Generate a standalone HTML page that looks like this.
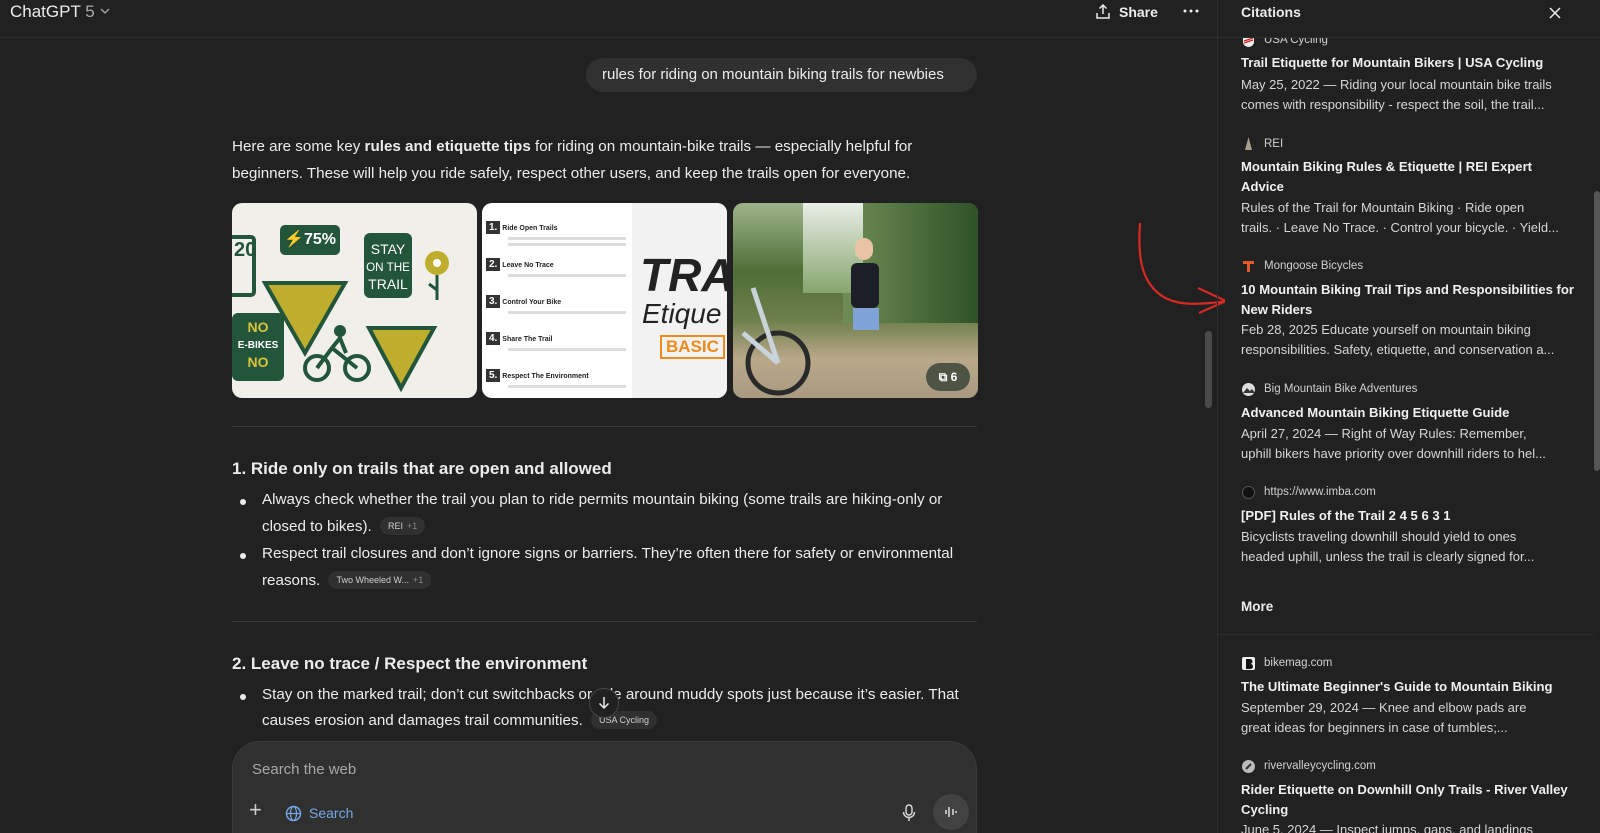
<!DOCTYPE html>
<html><head><meta charset="utf-8"><style>
*{box-sizing:border-box;margin:0;padding:0}
html,body{width:1600px;height:833px;overflow:hidden}
body{background:#212121;color:#ececec;font-family:"Liberation Sans",sans-serif;position:relative}
.abs{position:absolute}
.main-t{font-size:15.2px;line-height:27px;color:#ececec;white-space:nowrap}
.pill{display:inline-block;background:#303030;color:#cfcfcf;font-size:9px;border-radius:9px;padding:2px 8px;line-height:14px;vertical-align:2px;margin-left:4px}
.pill span{color:#888;margin-left:4px}
.bul{position:absolute;left:240px;width:6px;height:6px;border-radius:3px;background:#ececec}
.h{font-size:17px;font-weight:bold;white-space:nowrap}
.sb{position:absolute;left:1241px;font-size:13px;white-space:nowrap}
.src{left:1264px;color:#d0d0d0;font-size:11.5px}
.ttl{font-weight:bold;color:#f0f0f0;font-size:13.1px;line-height:19.5px}
.dsc{color:#d6d6d6;line-height:19.5px}
.fav{position:absolute;left:1242px;width:13px;height:13px}
</style></head><body>
<div class="abs" style="left:10px;top:2px;font-size:17px;color:#ececec">ChatGPT <span style="color:#aaa">5</span> <svg width="12" height="10" viewBox="0 0 12 10" style="vertical-align:1px"><path d="M2 3l4 4 4-4" stroke="#aaa" fill="none" stroke-width="1.3"/></svg></div>
<div class="abs" style="left:0;top:37px;width:1217px;height:1px;background:#2e2e2e"></div>
<svg class="abs" style="left:1095px;top:3px" width="16" height="17" viewBox="0 0 16 17"><path d="M8 11V2M4.5 5.5L8 2l3.5 3.5M2 10v5h12v-5" stroke="#ececec" fill="none" stroke-width="1.5"/></svg>
<div class="abs" style="left:1119px;top:4px;font-size:14px;font-weight:bold">Share</div>
<svg class="abs" style="left:1183px;top:9px" width="16" height="4"><circle cx="2" cy="2" r="1.5" fill="#ececec"/><circle cx="8" cy="2" r="1.5" fill="#ececec"/><circle cx="14" cy="2" r="1.5" fill="#ececec"/></svg>
<div class="abs" style="left:586px;top:58px;width:391px;height:34px;background:#303030;border-radius:17px;font-size:15px;line-height:34px;padding-left:16px">rules for riding on mountain biking trails for newbies</div>
<div class="abs main-t" style="left:232px;top:133px">Here are some key <b>rules and etiquette tips</b> for riding on mountain-bike trails — especially helpful for</div>
<div class="abs main-t" style="left:232px;top:160px">beginners. These will help you ride safely, respect other users, and keep the trails open for everyone.</div>
<div class="abs" style="left:232px;top:203px;width:245px;height:195px;background:#f1efea;border-radius:10px;overflow:hidden">
 <div class="abs" style="left:-6px;top:32px;width:30px;height:62px;border:4px solid #22553a;border-radius:5px;color:#22553a;font-weight:bold;font-size:20px;padding-left:4px">20</div>
 <div class="abs" style="left:48px;top:22px;width:60px;height:30px;background:#22553a;border-radius:5px;color:#fff;font-weight:bold;font-size:16px;line-height:30px;text-align:center">⚡75%</div>
 <div class="abs" style="left:132px;top:30px;width:48px;height:65px;background:#22553a;border-radius:6px;color:#fff;font-size:14px;text-align:center;line-height:17px;padding-top:8px">STAY<br><small>ON THE</small><br>TRAIL</div>
 <svg class="abs" style="left:28px;top:75px" width="90" height="80"><path d="M5 5h80L45 75z" fill="#bfae2e" stroke="#22553a" stroke-width="4"/></svg>
 <svg class="abs" style="left:132px;top:120px" width="75" height="70"><path d="M5 5h65L37 65z" fill="#bfae2e" stroke="#22553a" stroke-width="4"/></svg>
 <div class="abs" style="left:0;top:110px;width:52px;height:68px;background:#22553a;border-radius:6px;color:#d9c33a;font-weight:bold;font-size:14px;text-align:center;line-height:16px;padding-top:6px">NO<br><span style="color:#fff;font-size:10px">E-BIKES</span><br>NO</div>
 <svg class="abs" style="left:70px;top:120px" width="70" height="60"><circle cx="15" cy="45" r="12" stroke="#22553a" stroke-width="4" fill="none"/><circle cx="55" cy="45" r="12" stroke="#22553a" stroke-width="4" fill="none"/><circle cx="38" cy="8" r="6" fill="#22553a"/><path d="M15 45l15-20 25 20M30 25l8-10 6 15" stroke="#22553a" stroke-width="4" fill="none"/></svg>
 <svg class="abs" style="left:185px;top:45px" width="40" height="55"><circle cx="20" cy="15" r="12" fill="#bfae2e"/><circle cx="20" cy="15" r="4" fill="#fff"/><path d="M20 27v25M20 42l-8-6" stroke="#22553a" stroke-width="3"/></svg>
</div>
<div class="abs" style="left:482px;top:203px;width:245px;height:195px;background:#fff;border-radius:10px;overflow:hidden">
 <div class="abs" style="left:150px;top:0;width:95px;height:195px;background:#f2f2f2"></div>
 <div class="abs" style="left:158px;top:45px;font-size:46px;font-style:italic;font-weight:bold;color:#222">TRA</div>
 <div class="abs" style="left:160px;top:95px;font-size:28px;color:#222;font-style:italic">Etique</div>
 <div class="abs" style="left:178px;top:132px;border:2px solid #f08a1a;color:#f08a1a;font-weight:bold;font-size:17px;padding:0 4px">BASIC</div>
 <div class="abs" style="left:4px;top:18px;width:140px;font-size:7px;color:#222">
  <div style="height:37px"><b style="display:inline-block;background:#333;color:#fff;padding:1px 3px;font-size:10px">1.</b> <b>Ride Open Trails</b><div style="height:3px;background:#ddd;margin:3px 0 0 22px"></div><div style="height:3px;background:#ddd;margin:3px 0 0 22px"></div></div>
  <div style="height:37px"><b style="display:inline-block;background:#333;color:#fff;padding:1px 3px;font-size:10px">2.</b> <b>Leave No Trace</b><div style="height:3px;background:#ddd;margin:3px 0 0 22px"></div></div>
  <div style="height:37px"><b style="display:inline-block;background:#333;color:#fff;padding:1px 3px;font-size:10px">3.</b> <b>Control Your Bike</b><div style="height:3px;background:#ddd;margin:3px 0 0 22px"></div></div>
  <div style="height:37px"><b style="display:inline-block;background:#333;color:#fff;padding:1px 3px;font-size:10px">4.</b> <b>Share The Trail</b><div style="height:3px;background:#ddd;margin:3px 0 0 22px"></div></div>
  <div style="height:37px"><b style="display:inline-block;background:#333;color:#fff;padding:1px 3px;font-size:10px">5.</b> <b>Respect The Environment</b><div style="height:3px;background:#ddd;margin:3px 0 0 22px"></div></div>
 </div>
</div>
<div class="abs" style="left:733px;top:203px;width:245px;height:195px;border-radius:10px;overflow:hidden;background:linear-gradient(180deg,#9fb48a 0%,#4d6e36 35%,#6f7f4c 60%,#b9a88a 80%,#a99a80 100%)">
 <div class="abs" style="left:110px;top:0;width:135px;height:120px;background:linear-gradient(90deg,#6f8d55,#2f5227)"></div>
 <div class="abs" style="left:70px;top:0;width:60px;height:90px;background:linear-gradient(180deg,#e8eee6,#86a56e)"></div>
 <div class="abs" style="left:118px;top:60px;width:28px;height:45px;background:#1d1f28;border-radius:6px"></div>
 <div class="abs" style="left:122px;top:35px;width:18px;height:22px;background:#e8c3a6;border-radius:9px"></div>
 <div class="abs" style="left:120px;top:105px;width:26px;height:22px;background:#7fa3d6"></div>
 <svg class="abs" style="left:0;top:70px" width="80" height="125"><circle cx="45" cy="90" r="30" stroke="#2a2a2a" stroke-width="5" fill="none"/><path d="M10 60l35 30M20 15l25 75" stroke="#c9d3dc" stroke-width="5"/></svg>
 <div class="abs" style="left:193px;top:160px;width:44px;height:28px;background:rgba(60,70,55,.85);border-radius:14px;color:#fff;font-size:12px;font-weight:bold;line-height:28px;text-align:center">⧉ 6</div>
</div>
<div class="abs" style="left:232px;top:426px;width:745px;height:1px;background:#3a3a3a"></div>
<div class="abs h" style="left:232px;top:459px">1. Ride only on trails that are open and allowed</div>
<div class="bul" style="top:499px"></div>
<div class="abs main-t" style="left:262px;top:486px">Always check whether the trail you plan to ride permits mountain biking (some trails are hiking-only or</div>
<div class="abs main-t" style="left:262px;top:513px">closed to bikes). <span class="pill">REI<span>+1</span></span></div>
<div class="bul" style="top:553px"></div>
<div class="abs main-t" style="left:262px;top:540px">Respect trail closures and don’t ignore signs or barriers. They’re often there for safety or environmental</div>
<div class="abs main-t" style="left:262px;top:567px">reasons. <span class="pill">Two Wheeled W...<span>+1</span></span></div>
<div class="abs" style="left:232px;top:621px;width:745px;height:1px;background:#3a3a3a"></div>
<div class="abs h" style="left:232px;top:654px">2. Leave no trace / Respect the environment</div>
<div class="bul" style="top:694px"></div>
<div class="abs main-t" style="left:262px;top:681px">Stay on the marked trail; don’t cut switchbacks or ride around muddy spots just because it’s easier. That</div>
<div class="abs main-t" style="left:262px;top:707px">causes erosion and damages trail communities. <span class="pill">USA Cycling</span></div>
<div class="abs" style="left:589px;top:688px;width:30px;height:30px;border-radius:15px;background:#212121;border:1px solid #444;text-align:center"><svg width="14" height="16" viewBox="0 0 14 16" style="margin-top:6px"><path d="M7 2v11M2.5 8.5L7 13l4.5-4.5" stroke="#ececec" fill="none" stroke-width="1.5"/></svg></div>
<div class="abs" style="left:232px;top:741px;width:745px;height:92px;background:#303030;border-radius:28px 28px 0 0;border:1px solid #3a3a3a;border-bottom:none"></div>
<div class="abs" style="left:252px;top:761px;font-size:15px;color:#a8a8a8">Search the web</div>
<div class="abs" style="left:249px;top:800px;font-size:22px;color:#ccc;line-height:20px;font-weight:300">+</div>
<svg class="abs" style="left:285px;top:805px" width="17" height="17" viewBox="0 0 17 17"><circle cx="8.5" cy="8.5" r="7" stroke="#74a8e8" fill="none" stroke-width="1.4"/><ellipse cx="8.5" cy="8.5" rx="3" ry="7" stroke="#74a8e8" fill="none" stroke-width="1.2"/><path d="M1.5 8.5h14" stroke="#74a8e8" stroke-width="1.2"/></svg>
<div class="abs" style="left:309px;top:805px;font-size:14px;color:#74a8e8">Search</div>
<svg class="abs" style="left:902px;top:804px" width="14" height="18" viewBox="0 0 14 18"><rect x="4" y="1" width="6" height="10" rx="3" stroke="#ddd" fill="none" stroke-width="1.4"/><path d="M1.5 8a5.5 5.5 0 0011 0M7 13.5V17" stroke="#ddd" fill="none" stroke-width="1.4"/></svg>
<div class="abs" style="left:933px;top:794px;width:36px;height:36px;border-radius:18px;background:#424242"></div>
<svg class="abs" style="left:943px;top:804px" width="16" height="16"><path d="M3 6v4M6 3v10M10 5v6M13 7v2" stroke="#ddd" stroke-width="1.5"/></svg>
<div class="abs" style="left:1205px;top:331px;width:7px;height:77px;background:#4a4a4a;border-radius:4px"></div>
<svg class="abs" style="left:1130px;top:215px" width="95" height="105"><path d="M10 8c-2 30 0 55 18 70c14 12 35 13 70 8" stroke="#d62a22" fill="none" stroke-width="2.2"/><path d="M68 73l28 13-27 12" stroke="#d62a22" fill="none" stroke-width="2.2"/></svg>
<div class="abs" style="left:1217px;top:0;width:1px;height:833px;background:#2e2e2e"></div>
<div class="abs" style="left:1218px;top:37px;width:382px;height:1px;background:#2e2e2e"></div>
<div class="abs" style="left:1241px;top:4px;font-size:14px;font-weight:bold">Citations</div>
<svg class="abs" style="left:1548px;top:6px" width="14" height="14"><path d="M2 2l10 10M12 2L2 12" stroke="#ececec" stroke-width="1.5"/></svg>
<div class="abs" style="left:1594px;top:191px;width:6px;height:280px;background:#555;border-radius:3px"></div>
<div style="position:absolute;left:1218px;top:38px;width:376px;height:795px;overflow:hidden">
<div style="position:absolute;left:-1218px;top:-38px;width:1600px;height:833px">
<svg class="fav" style="top:35px" viewBox="0 0 13 13"><path d="M1 3h11v4c0 3-3 5-5.5 5S1 10 1 7z" fill="#eee"/><path d="M2 6l9-3M2 8l9-3" stroke="#c22" stroke-width="1.2"/></svg>
<div class="sb src" style="top:34px">USA Cycling</div>
<div class="sb ttl" style="top:53px">Trail Etiquette for Mountain Bikers | USA Cycling</div>
<div class="sb dsc" style="top:75px">May 25, 2022 — Riding your local mountain bike trails<br>comes with responsibility - respect the soil, the trail...</div>
<svg class="fav" style="top:137px" viewBox="0 0 13 13"><path d="M6.5 0L10 13H3z" fill="#a89c8c"/></svg>
<div class="sb src" style="top:138px">REI</div>
<div class="sb ttl" style="top:157px">Mountain Biking Rules &amp; Etiquette | REI Expert<br>Advice</div>
<div class="sb dsc" style="top:198px">Rules of the Trail for Mountain Biking · Ride open<br>trails. · Leave No Trace. · Control your bicycle. · Yield...</div>
<svg class="fav" style="top:260px" viewBox="0 0 13 13"><path d="M1 1h11v3H8v8H5V4H1z" fill="#e05a2a"/></svg>
<div class="sb src" style="top:260px">Mongoose Bicycles</div>
<div class="sb ttl" style="top:280px">10 Mountain Biking Trail Tips and Responsibilities for<br>New Riders</div>
<div class="sb dsc" style="top:320px">Feb 28, 2025 Educate yourself on mountain biking<br>responsibilities. Safety, etiquette, and conservation a...</div>
<svg class="fav" style="top:383px" viewBox="0 0 13 13"><circle cx="6.5" cy="6.5" r="6.5" fill="#ddd"/><path d="M1 10l4-5 3 3 2-2 3 4" fill="#333"/></svg>
<div class="sb src" style="top:383px">Big Mountain Bike Adventures</div>
<div class="sb ttl" style="top:403px">Advanced Mountain Biking Etiquette Guide</div>
<div class="sb dsc" style="top:424px">April 27, 2024 — Right of Way Rules: Remember,<br>uphill bikers have priority over downhill riders to hel...</div>
<svg class="fav" style="top:486px" viewBox="0 0 13 13"><circle cx="6.5" cy="6.5" r="6" fill="#111" stroke="#555"/></svg>
<div class="sb src" style="top:486px">https://www.imba.com</div>
<div class="sb ttl" style="top:506px">[PDF] Rules of the Trail 2 4 5 6 3 1</div>
<div class="sb dsc" style="top:527px">Bicyclists traveling downhill should yield to ones<br>headed uphill, unless the trail is clearly signed for...</div>
<div class="sb" style="top:599px;font-weight:bold;font-size:13.5px">More</div>
<div class="abs" style="left:1218px;top:634px;width:376px;height:1px;background:#2e2e2e"></div>
<svg class="fav" style="top:657px" viewBox="0 0 13 13"><rect width="13" height="13" rx="2" fill="#eee"/><path d="M4 2h4a2.5 2.5 0 010 5H4zM4 7h4.5a2.5 2.5 0 010 5H4z" fill="#111"/></svg>
<div class="sb src" style="top:657px">bikemag.com</div>
<div class="sb ttl" style="top:677px">The Ultimate Beginner's Guide to Mountain Biking</div>
<div class="sb dsc" style="top:698px">September 29, 2024 — Knee and elbow pads are<br>great ideas for beginners in case of tumbles;...</div>
<svg class="fav" style="top:760px" viewBox="0 0 13 13"><circle cx="6.5" cy="6.5" r="6.5" fill="#bbb"/><path d="M4 9l5-5" stroke="#333" stroke-width="2"/></svg>
<div class="sb src" style="top:760px">rivervalleycycling.com</div>
<div class="sb ttl" style="top:780px">Rider Etiquette on Downhill Only Trails - River Valley<br>Cycling</div>
<div class="sb dsc" style="top:820px">June 5, 2024 — Inspect jumps, gaps, and landings</div>
</div></div>
</body></html>
